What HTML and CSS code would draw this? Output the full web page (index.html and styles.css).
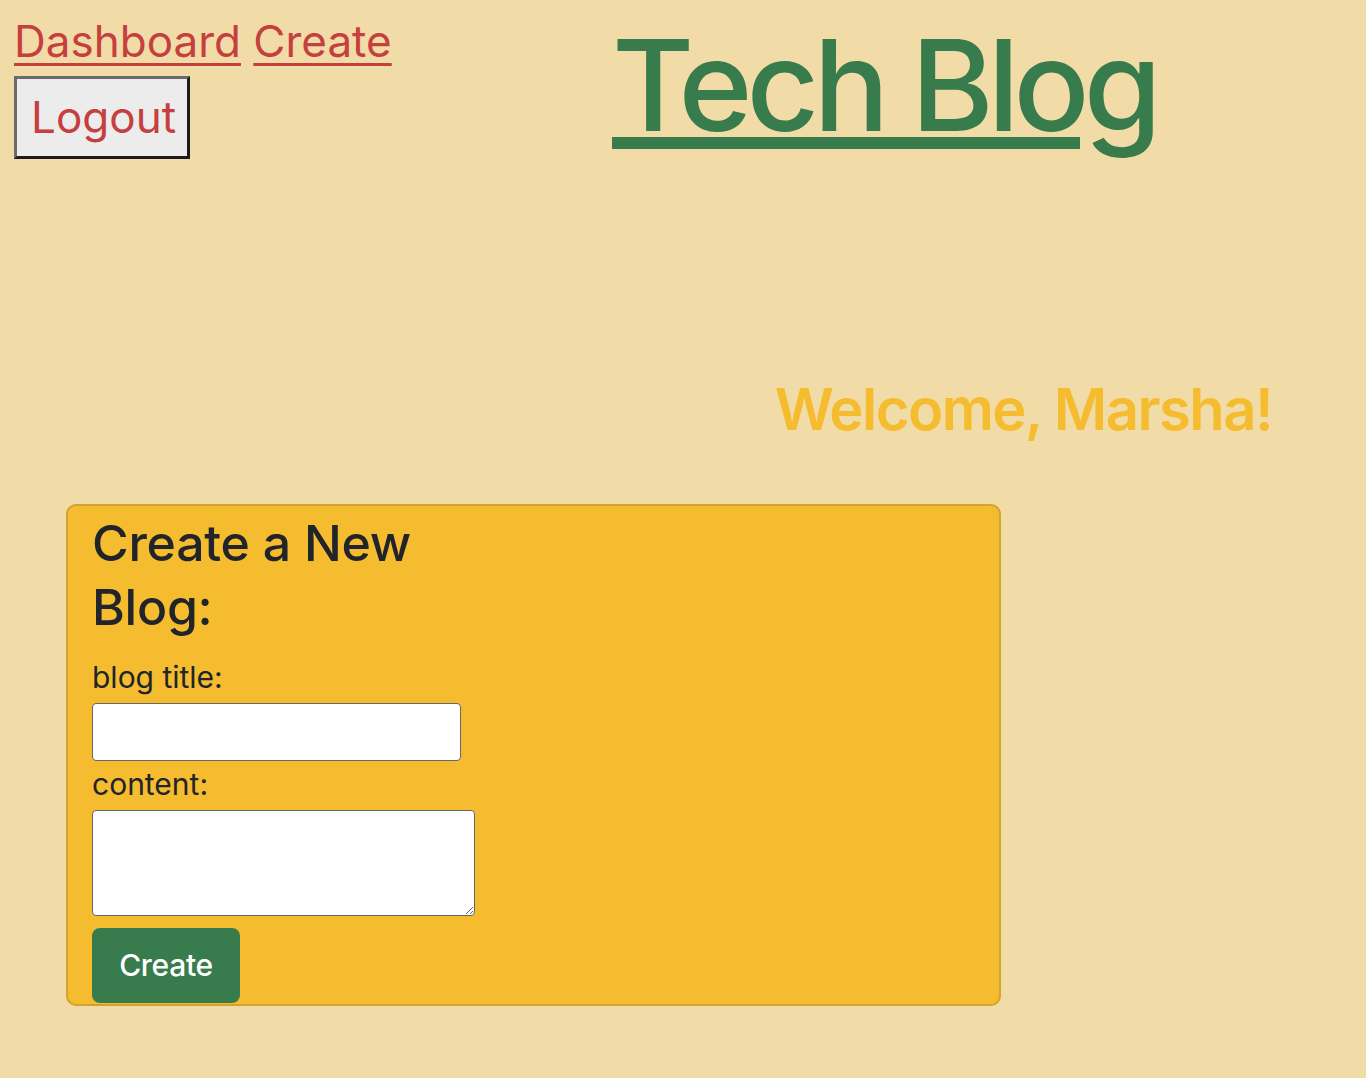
FILE: index.html
```html
<!DOCTYPE html>
<html lang="en">
<head>
<meta charset="utf-8">
<title>Tech Blog</title>
<link rel="stylesheet" href="styles.css">
</head>
<body>
<header class="top">
  <nav class="nav">
    <div class="links"><a href="#" class="nav-link">Dashboard</a> <a href="#" class="nav-link">Create</a></div>
    <button class="logout">Logout</button>
  </nav>
  <h1 class="brand"><a href="#">Tech Blog</a></h1>
</header>
<main class="main">
  <h2 class="welcome">Welcome, Marsha!</h2>
  <section class="card">
    <h3 class="card-title">Create a New Blog:</h3>
    <form class="form">
      <label class="label" for="t">blog title:</label>
      <input class="input" id="t" type="text">
      <label class="label" for="c">content:</label>
      <textarea class="area" id="c"></textarea>
      <button class="create" type="button">Create</button>
    </form>
  </section>
</main>
</body>
</html>
```
FILE: styles.css
```css
html, body {
  margin: 0;
  padding: 0;
}
body {
  background: #f1dca8;
  font-family: Inter, "Noto Sans", sans-serif;
  color: #212529;
  min-height: 1078px;
}
.top {
  display: flex;
  align-items: flex-start;
  padding: 14px 0 0 14px;
}
.nav {
  width: 598px;
  flex: none;
}
.links {
  font-size: 44px;
  line-height: 54px;
}
.nav-link {
  color: #c63f3f;
  text-decoration: underline;
  text-decoration-thickness: 3px;
  text-underline-offset: 6px;
}
.logout {
  margin-top: 8px;
  font-family: Inter, "Noto Sans", sans-serif;
  font-size: 44px;
  line-height: 52px;
  color: #c63f3f;
  background: #ececec;
  border-width: 3px;
  border-style: solid;
  border-color: #6b6b6b #1c1c1c #1c1c1c #6b6b6b;
  padding: 12px 14px 13px 14px;
  width: 176px;
}
.brand {
  margin: 0;
  font-size: 126px;
  font-weight: 500;
  letter-spacing: -0.047em;
  line-height: 1;
  padding-top: 8px;
}
.brand a {
  color: #387b4d;
  text-decoration: underline;
  text-decoration-thickness: 12px;
  text-underline-offset: 6px;
}
.main {
  padding: 0 0 0 66px;
}
.welcome {
  margin: 216px 94px 0 0;
  text-align: right;
  font-size: 58px;
  font-weight: 600;
  letter-spacing: -0.027em;
  color: #f5bc2f;
  line-height: 1.2;
}
.card {
  margin-top: 59px;
  width: 935px;
  height: 502px;
  box-sizing: border-box;
  background: #f5bc2f;
  border: 2px solid #d3a22f;
  border-radius: 10px;
  padding: 5px 24px 0 24px;
}
.card-title {
  margin: 0;
  width: 340px;
  font-size: 50px;
  font-weight: 500;
  letter-spacing: -0.005em;
  line-height: 64px;
}
.form {
  display: flex;
  flex-direction: column;
  align-items: flex-start;
}
.label {
  font-size: 30px;
  line-height: 40px;
  margin-top: 18px;
}
.label + .input,
.label + .area {
  margin-top: 6px;
}
.input {
  width: 369px;
  height: 58px;
  box-sizing: border-box;
  border: 1.5px solid #666;
  border-radius: 4px;
  background: #fff;
}
.input + .label {
  margin-top: 3px;
}
.area {
  width: 383px;
  height: 106px;
  box-sizing: border-box;
  border: 1.5px solid #666;
  border-radius: 4px;
  background: #fff;
  resize: both;
}
.create {
  margin-top: 12px;
  width: 148px;
  height: 75px;
  background: #387b4d;
  color: #fff;
  border: none;
  border-radius: 8px;
  font-family: Inter, "Noto Sans", sans-serif;
  font-size: 30px;
  font-weight: 500;
  letter-spacing: -0.01em;
}
```
